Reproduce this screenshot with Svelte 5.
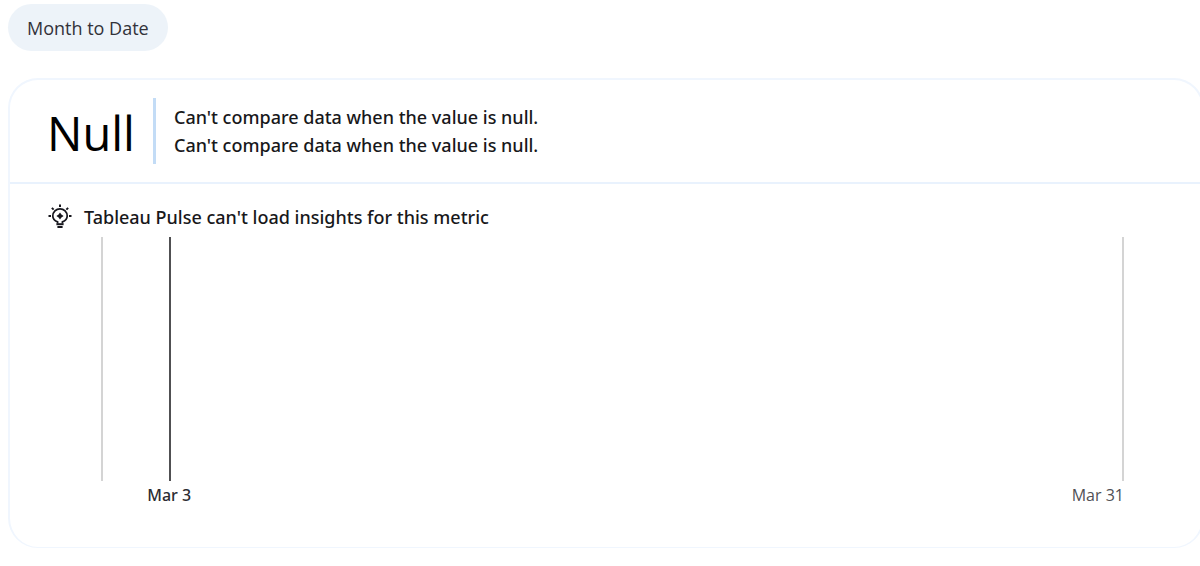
<script>
  const period = 'Month to Date';
  const value = 'Null';
  const comparisons = [
    "Can't compare data when the value is null.",
    "Can't compare data when the value is null."
  ];
  const daysElapsed = 2;
  const daysLeft = 28;
  const rays = [-90, -45, 0, 45, 90];
</script>

<main>
  <button class="period" type="button">{period}</button>

  <section class="card">
    <header>
      <div class="value">{value}</div>
      <div class="comparisons">
        {#each comparisons as text}
          <p>{text}</p>
        {/each}
      </div>
    </header>

    <div class="body">
      <h2>
        <svg width="24" height="26" viewBox="0 0 24 26" fill="none" stroke="#16161d" stroke-width="2" aria-hidden="true">
          {#each rays as angle}
            <path d="M12 0.500V3" transform="rotate({angle} 12 12)" />
          {/each}
          <path d="M9.600 19.500v-1.600C6.800 16.800 4.800 14.700 4.800 12a7.200 7.200 0 0 1 14.400 0c0 2.700-2 4.800-4.800 5.900V19.500" stroke-width="1.700" />
          <path d="M8.400 20.200h7.200" />
          <path d="M9.400 23h5.200" />
          <path d="M12 8.400l1.400 2.200 2.200 1.400-2.200 1.400L12 15.600l-1.400-2.200L8.400 12l2.200-1.400z" fill="#16161d" stroke="none" />
        </svg>
        Tableau Pulse can't load insights for this metric
      </h2>

      <div class="chart" style="grid-template-columns: {daysElapsed}fr {daysLeft}fr">
        <div class="elapsed"></div>
        <div class="remaining"></div>
        <div class="labels">
          <span class="current">Mar 3</span>
          <span>Mar 31</span>
        </div>
      </div>
    </div>
  </section>
</main>

<style>
  :global(body) {
    background: #fff;
    overflow-x: hidden;
  }

  main {
    padding: 4px 0 18px 8px;
    font-family: 'Segoe UI', 'Open Sans', 'Noto Sans', sans-serif;
    color: #18181b;
  }

  .period {
    display: block;
    height: 47px;
    padding: 0 19px;
    border: 0;
    border-radius: 24px;
    background: #edf3f9;
    color: #32323a;
    font: inherit;
    font-size: 18px;
  }

  .card {
    margin: 27px -4px 0 0;
    border: 2px solid #f0f6fe;
    border-bottom-width: 1px;
    border-radius: 30px;
  }

  header {
    display: flex;
    align-items: center;
    gap: 18px;
    padding: 18px 37px;
    border-bottom: 2px solid #e9f2fd;
  }

  .value {
    padding-top: 4px;
    color: #000;
    font-size: 47px;
    line-height: 60px;
  }

  .comparisons {
    padding: 5px 0 5px 18px;
    border-left: 3px solid #c3dcf6;
  }

  p,
  h2 {
    margin: 0;
    font-family: 'Segoe UI', 'Noto Sans', sans-serif;
    font-size: 18px;
    font-weight: 500;
    line-height: 28px;
  }

  .body {
    padding: 19px 78px 38px 38px;
  }

  h2 {
    display: flex;
    align-items: center;
    gap: 12px;
  }

  svg {
    flex: none;
  }

  .chart {
    display: grid;
    margin: 6px 0 0 53px;
  }

  .elapsed,
  .remaining {
    height: 244px;
    border-left: 2px solid #d4d4d4;
  }

  .remaining {
    border-right: 2px solid #d4d4d4;
    border-left-color: #505052;
  }

  .labels {
    grid-column: 2;
    display: flex;
    justify-content: space-between;
    font-size: 16px;
    line-height: 28px;
    color: #505055;
  }

  .current {
    color: #2c2c32;
    font-family: 'Segoe UI', 'Noto Sans', sans-serif;
    font-weight: 500;
    transform: translateX(-50%);
  }
</style>
